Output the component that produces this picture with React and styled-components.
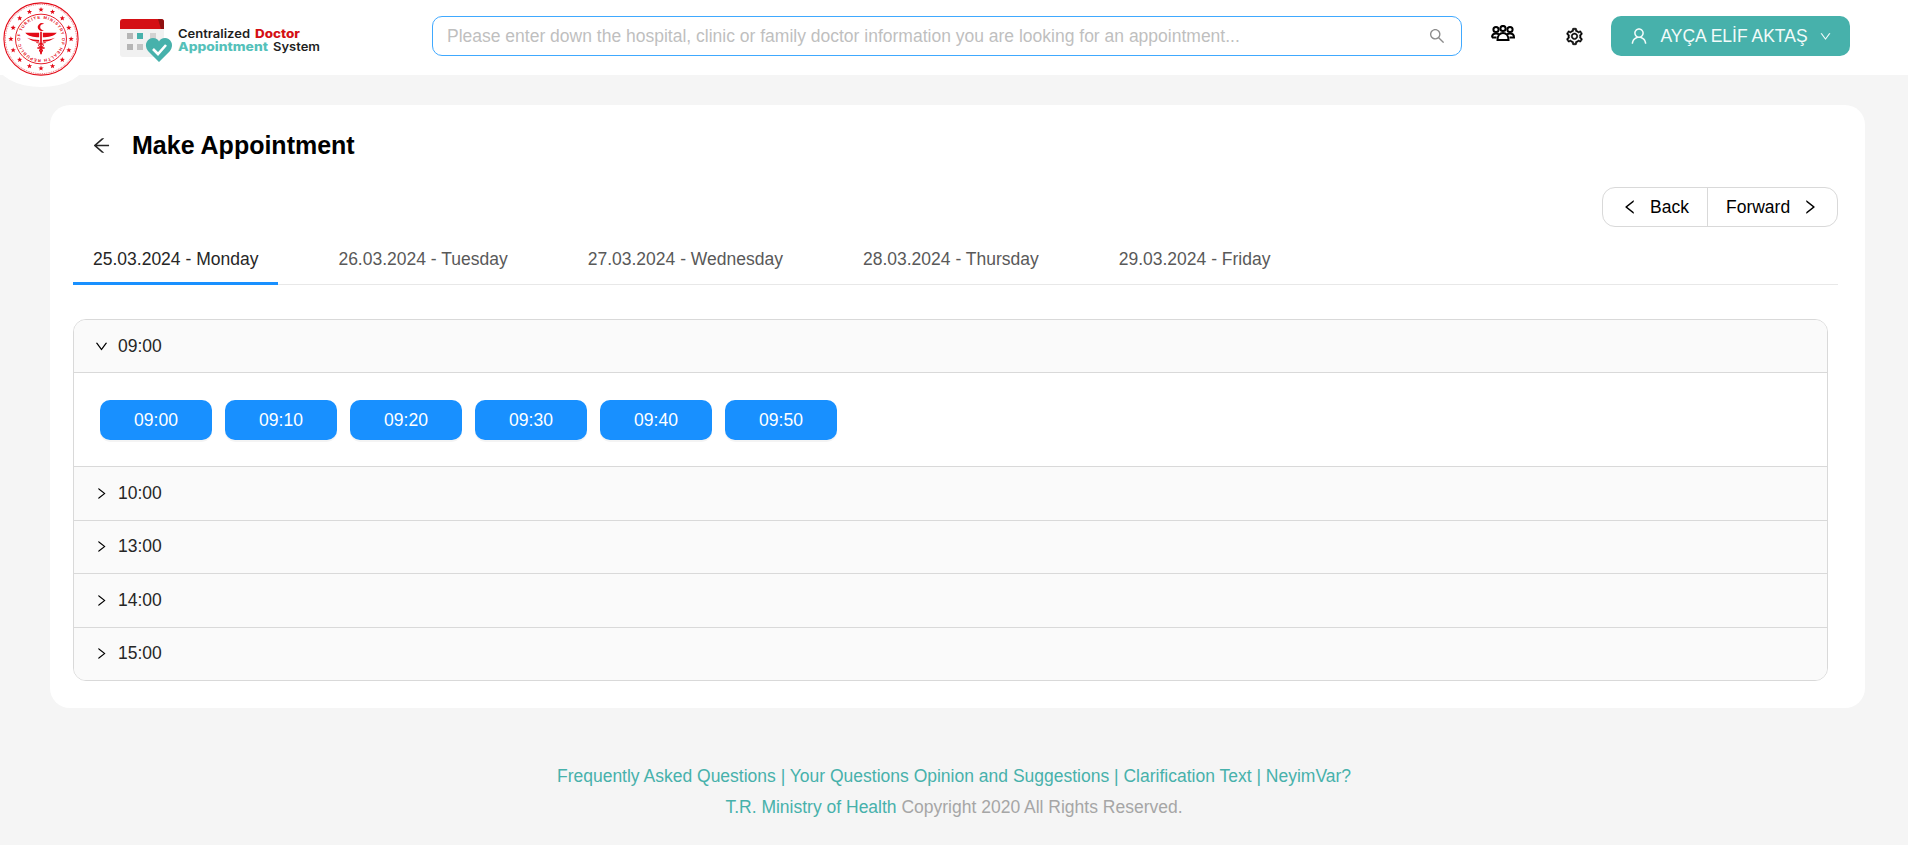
import React from 'react';
import styled, { createGlobalStyle } from 'styled-components';
import {
  AiOutlineArrowLeft,
  AiOutlineDown,
  AiOutlineLeft,
  AiOutlineRight,
  AiOutlineSearch,
  AiOutlineSetting,
  AiOutlineUser,
} from 'react-icons/ai';

const TEAL = '#47b1ab';
const BLUE = '#1890ff';

const GlobalStyle = createGlobalStyle`
  html, body {
    margin: 0;
    padding: 0;
    background: #f5f5f5;
    font-family: "Liberation Sans", Arial, sans-serif;
    font-size: 17.5px;
  }
`;

const Page = styled.div`
  width: 1908px;
  min-height: 845px;
  display: flex;
  flex-direction: column;
`;

const Header = styled.header`
  height: 75px;
  background: #fff;
  display: flex;
  align-items: flex-start;
`;

const SealWrap = styled.div`
  width: 88px;
  height: 87px;
  margin-left: -3px;
  padding-top: 2px;
  box-sizing: border-box;
  flex: none;
  border-radius: 0 0 44px 44px / 0 0 24px 24px;
  background: #fff;
  display: flex;
  align-items: flex-start;
  justify-content: center;
`;

const BrandLogo = styled.svg`
  width: 210px;
  height: 60px;
  margin: 10px 0 0 33px;
  flex: none;
`;

const SearchBox = styled.div`
  width: 1030px;
  height: 40px;
  margin: 16px 0 0 104px;
  box-sizing: border-box;
  flex: none;
  display: flex;
  align-items: center;
  padding: 0 15px 0 14px;
  background: #fff;
  border: 1px solid #40a9ff;
  border-radius: 10px;
`;

const SearchInput = styled.span`
  flex: 1;
  color: #bfbfbf;
  white-space: nowrap;
  overflow: hidden;
`;

const SearchIcon = styled(AiOutlineSearch)`
  font-size: 18px;
  color: #8c8c8c;
`;

const IconButton = styled.div`
  flex: none;
  width: 56px;
  height: ${(p) => p.$h}px;
  margin-left: ${(p) => p.$ml}px;
  display: flex;
  align-items: center;
  justify-content: center;
  color: #000;
`;

const GearIcon = styled(AiOutlineSetting)`
  font-size: 19px;
  stroke: currentColor;
  stroke-width: 30;
`;

const UserButton = styled.div`
  flex: none;
  width: 239px;
  height: 40px;
  margin: 16px 0 0 9px;
  background: ${TEAL};
  border-radius: 10px;
  color: #f2fbfa;
  display: flex;
  align-items: center;
  justify-content: center;
  gap: 11px;
`;

const Main = styled.main`
  padding: 30px 43px 0 50px;
`;

const Card = styled.section`
  height: 603px;
  box-sizing: border-box;
  background: #fff;
  border-radius: 20px;
  padding: 22px 27px 0 23px;
`;

const TitleRow = styled.div`
  display: flex;
  align-items: center;
  height: 36px;
  padding-left: 18px;
  gap: 20px;
`;

const BackArrow = styled(AiOutlineArrowLeft)`
  font-size: 21px;
  color: #262626;
`;

const Title = styled.h1`
  margin: 0;
  font-size: 25px;
  line-height: 36px;
  font-weight: 700;
  color: #000;
`;

const PagerRow = styled.div`
  display: flex;
  justify-content: flex-end;
  margin-top: 24px;
`;

const Pager = styled.div`
  display: flex;
  width: 236px;
  height: 40px;
  box-sizing: border-box;
  border: 1px solid #d9d9d9;
  border-radius: 13px;
`;

const PagerButton = styled.div`
  display: flex;
  align-items: center;
  justify-content: center;
  gap: 11px;
  flex: ${(p) => p.$grow};
  color: #000;
  border-left: ${(p) => (p.$divided ? '1px solid #d9d9d9' : 'none')};
`;

const Tabs = styled.nav`
  display: flex;
  gap: 40px;
  height: 58px;
  box-sizing: border-box;
  border-bottom: 1px solid #e8e8e8;
`;

const Tab = styled.div`
  height: 58px;
  box-sizing: border-box;
  padding: 20px 20px 0;
  line-height: 25px;
  white-space: nowrap;
  color: ${(p) => (p.$active ? '#262626' : '#595959')};
  border-bottom: 3px solid ${(p) => (p.$active ? BLUE : 'transparent')};
`;

const Collapse = styled.div`
  margin: 34px 10px 0 0;
  border: 1px solid #d9d9d9;
  border-radius: 13px;
  overflow: hidden;
`;

const PanelHeader = styled.div`
  height: ${(p) => (p.$first ? 52 : 53.5)}px;
  box-sizing: border-box;
  display: flex;
  align-items: center;
  gap: 9px;
  padding-left: 20px;
  background: #fafafa;
  color: #262626;
  border-top: ${(p) => (p.$first ? 'none' : '1px solid #d9d9d9')};
`;

const Chevron = styled.span`
  width: 15px;
  display: flex;
  justify-content: center;
  font-size: 17px;
  color: #000;
`;

const PanelBody = styled.div`
  display: flex;
  gap: 13px;
  padding: 27px 26px 26px;
  border-top: 1px solid #d9d9d9;
  background: #fff;
`;

const SlotButton = styled.div`
  width: 112px;
  height: 40px;
  border-radius: 10px;
  background: ${BLUE};
  color: #fff;
  display: flex;
  align-items: center;
  justify-content: center;
  box-shadow: 0 2px 0 rgba(0, 0, 0, 0.045);
`;

const Footer = styled.footer`
  margin-top: 53px;
  text-align: center;
  line-height: 31px;
  color: #a6a6a6;
`;

const FooterLink = styled.span`
  color: ${TEAL};
`;

const days = [
  '25.03.2024 - Monday',
  '26.03.2024 - Tuesday',
  '27.03.2024 - Wednesday',
  '28.03.2024 - Thursday',
  '29.03.2024 - Friday',
];
const slots = ['09:00', '09:10', '09:20', '09:30', '09:40', '09:50'];
const hours = ['10:00', '13:00', '14:00', '15:00'];

const star = (cx, cy, r) => {
  const pts = [];
  for (let i = 0; i < 10; i++) {
    const a = (Math.PI / 5) * i - Math.PI / 2;
    const rad = i % 2 === 0 ? r : r * 0.42;
    pts.push(`${(cx + rad * Math.cos(a)).toFixed(2)},${(cy + rad * Math.sin(a)).toFixed(2)}`);
  }
  return pts.join(' ');
};

const Seal = () => {
  const stars = Array.from({ length: 16 }, (_, i) => {
    const a = (Math.PI * 2 * i) / 16 - Math.PI / 2;
    return star(41 + 32.5 * Math.cos(a), 41 + 32.5 * Math.sin(a), 3);
  });
  return (
    <svg width="76" height="74" viewBox="0 0 82 82" preserveAspectRatio="none">
      <circle cx="41" cy="41" r="40" fill="none" stroke="#e30a17" strokeWidth="1.2" />
      <circle cx="41" cy="41" r="38.4" fill="none" stroke="#e30a17" strokeWidth="0.7" strokeDasharray="1 1" />
      <circle cx="41" cy="41" r="27.5" fill="none" stroke="#e30a17" strokeWidth="1" />
      {stars.map((p) => (
        <polygon key={p} points={p} fill="#e30a17" />
      ))}
      <defs>
        <path id="sealText" d="M 41 63.5 A 22.5 22.5 0 1 1 41.01 63.5" />
      </defs>
      <text fontSize="4.6" fontWeight="700" fill="#e30a17" fontFamily="Liberation Sans, sans-serif">
        <textPath href="#sealText" textLength="138">REPUBLIC OF TÜRKİYE MINISTRY OF HEALTH</textPath>
      </text>
      <path d="M44.5 24.5 A 4.2 4.2 0 1 0 44.5 31 A 3.4 3.4 0 1 1 44.5 24.5 Z" fill="#e30a17" />
      <path d="M24 34 H39 V39 C 33 39 27 38 24 34 Z M26 39.5 C 30 41 35 42 39 42 V44 C 34 44 29 42 26 39.5 Z" fill="#e30a17" />
      <path d="M58 34 H43 V39 C 49 39 55 38 58 34 Z M56 39.5 C 52 41 47 42 43 42 V44 C 48 44 53 42 56 39.5 Z" fill="#e30a17" />
      <path d="M41 33 L 41 58" stroke="#e30a17" strokeWidth="1.8" />
      <path d="M36 45 C 46 47 46 49 37 51 C 44 53 44 54 40 56" fill="none" stroke="#e30a17" strokeWidth="1.1" />
      <path d="M46 45 C 36 47 36 49 45 51 C 38 53 38 54 42 56" fill="none" stroke="#e30a17" strokeWidth="1.1" />
    </svg>
  );
};

const Brand = () => (
  <BrandLogo viewBox="0 0 210 60">
    <rect x="2" y="9" width="44" height="38" rx="3" fill="#f1f1f1" />
    <path d="M2 19 V12 a3 3 0 0 1 3 -3 H43 a3 3 0 0 1 3 3 V19 Z" fill="#d40f14" />
    <path d="M40 9 h3 a3 3 0 0 1 3 3 v7 h-3 Z" fill="#8f1010" />
    <rect x="9" y="23" width="6" height="6" fill="#b5b5b5" />
    <rect x="19" y="23" width="6" height="6" fill="#47b1ab" />
    <rect x="32" y="23" width="6" height="6" fill="#d2d2d2" />
    <rect x="9" y="34" width="6" height="6" fill="#b5b5b5" />
    <rect x="19" y="34" width="6" height="6" fill="#c4c4c4" />
    <path
      d="M41 52 L30 41 C 25 34 30 28 35 28 C 38 28 40 29.5 41 31.5 C 42 29.5 44 28 47 28 C 52 28 57 34 52 41 Z"
      fill="#47b1ab"
    />
    <path d="M35 39 L40 44 L48 35" fill="none" stroke="#fff" strokeWidth="2.6" />
    <text x="60" y="28" fontSize="12" fontWeight="600" fontFamily="Inter, sans-serif" fill="#1f1f1f" textLength="72" lengthAdjust="spacingAndGlyphs">
      Centralized
    </text>
    <text x="137" y="28" fontSize="12" fontWeight="800" fontFamily="Inter, sans-serif" fill="#d40f14" textLength="45" lengthAdjust="spacingAndGlyphs">
      Doctor
    </text>
    <text x="60" y="40.5" fontSize="12" fontWeight="800" fontFamily="Inter, sans-serif" fill="#55c1ba" textLength="90" lengthAdjust="spacingAndGlyphs">
      Appointment
    </text>
    <text x="155" y="40.5" fontSize="12" fontWeight="600" fontFamily="Inter, sans-serif" fill="#1f1f1f" textLength="47" lengthAdjust="spacingAndGlyphs">
      System
    </text>
  </BrandLogo>
);

const TeamIcon = () => (
  <svg width="24" height="17" viewBox="0 0 24 17" fill="none" stroke="#000" strokeWidth="2">
    <circle cx="5" cy="4.5" r="2.6" />
    <circle cx="12" cy="3.5" r="2.6" />
    <circle cx="19" cy="4.5" r="2.6" />
    <path d="M1 12.5 C1 9.5 3 8.5 5 8.5 C6.5 8.5 7.5 9 8 9.5 M16 9.5 C16.5 9 17.5 8.5 19 8.5 C21 8.5 23 9.5 23 12.5 H18.5 M5.5 12.5 H1" />
    <path d="M6.5 15 C6.5 10.5 9 8 12 8 C15 8 17.5 10.5 17.5 15 Z" />
  </svg>
);

const App = () => (
  <Page>
    <GlobalStyle />
    <Header>
      <SealWrap>
        <Seal />
      </SealWrap>
      <Brand />
      <SearchBox>
        <SearchInput>Please enter down the hospital, clinic or family doctor information you are looking for an appointment...</SearchInput>
        <SearchIcon />
      </SearchBox>
      <IconButton $h={66} $ml={13}>
        <TeamIcon />
      </IconButton>
      <IconButton $h={72} $ml={15}>
        <GearIcon />
      </IconButton>
      <UserButton>
        <AiOutlineUser size={20} />
        <span>AYÇA ELİF AKTAŞ</span>
        <AiOutlineDown size={13} />
      </UserButton>
    </Header>
    <Main>
      <Card>
        <TitleRow>
          <BackArrow />
          <Title>Make Appointment</Title>
        </TitleRow>
        <PagerRow>
          <Pager>
            <PagerButton $grow="105">
              <AiOutlineLeft size={18} />
              Back
            </PagerButton>
            <PagerButton $grow="130" $divided>
              Forward
              <AiOutlineRight size={18} />
            </PagerButton>
          </Pager>
        </PagerRow>
        <Tabs>
          {days.map((d, i) => (
            <Tab key={d} $active={i === 0}>
              {d}
            </Tab>
          ))}
        </Tabs>
        <Collapse>
          <PanelHeader $first>
            <Chevron>
              <AiOutlineDown />
            </Chevron>
            09:00
          </PanelHeader>
          <PanelBody>
            {slots.map((s) => (
              <SlotButton key={s}>{s}</SlotButton>
            ))}
          </PanelBody>
          {hours.map((h) => (
            <PanelHeader key={h}>
              <Chevron>
                <AiOutlineRight />
              </Chevron>
              {h}
            </PanelHeader>
          ))}
        </Collapse>
      </Card>
    </Main>
    <Footer>
      <div>
        <FooterLink>Frequently Asked Questions | Your Questions Opinion and Suggestions | Clarification Text | NeyimVar?</FooterLink>
      </div>
      <div>
        <FooterLink>T.R. Ministry of Health</FooterLink> Copyright 2020 All Rights Reserved.
      </div>
    </Footer>
  </Page>
);

export default App;
